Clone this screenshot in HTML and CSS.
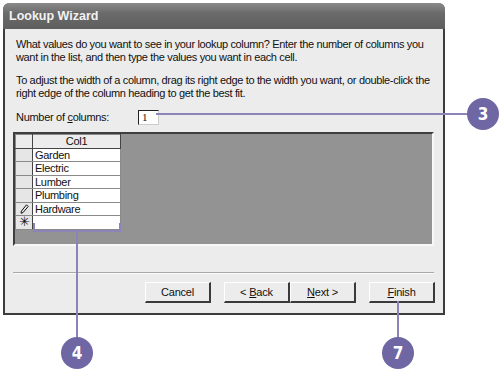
FILE: index.html
```html
<!DOCTYPE html>
<html>
<head>
    <meta charset="utf-8">
    <title>Lookup Wizard</title>
    <link rel="stylesheet" href="styles.css">
</head>
<body>
    <div class="stage">
        <div class="window">
            <div class="titlebar">Lookup Wizard</div>
            <div class="content">
                <p class="text">What values do you want to see in your lookup column? Enter the number of columns you<br>want in the list, and then type the values you want in each cell.</p>
                <p class="text">To adjust the width of a column, drag its right edge to the width you want, or double-click the<br>right edge of the column heading to get the best fit.</p>

                <div class="count-row">
                    <span class="count-label">Number of <u>c</u>olumns:</span>
                    <span class="count-box">1</span>
                </div>

                <div class="grid-panel">
                    <table class="grid">
                        <tr class="head"><td class="sel"></td><td class="cell">Col1</td></tr>
                        <tr><td class="sel"></td><td class="cell">Garden</td></tr>
                        <tr><td class="sel"></td><td class="cell">Electric</td></tr>
                        <tr><td class="sel"></td><td class="cell">Lumber</td></tr>
                        <tr><td class="sel"></td><td class="cell">Plumbing</td></tr>
                        <tr>
                            <td class="sel">
                                <svg width="9" height="10" viewBox="0 0 9 10"><path d="M6.5 0.8 L8.2 2.5 L3 8.6 L1 9.2 L1.4 7.1 Z" fill="none" stroke="#111" stroke-width="1"/></svg>
                            </td>
                            <td class="cell">Hardware</td>
                        </tr>
                        <tr><td class="sel star">&#10035;</td><td class="cell"></td></tr>
                    </table>
                </div>

                <div class="divider"></div>

                <div class="buttons">
                    <button class="btn">Cancel</button>
                    <div class="pair">
                        <button class="btn">&lt; <u>B</u>ack</button>
                        <button class="btn"><u>N</u>ext &gt;</button>
                    </div>
                    <button class="btn"><u>F</u>inish</button>
                </div>
            </div>
        </div>

        <!-- callouts -->
        <div class="line h3"></div>
        <div class="badge b3">3</div>

        <div class="bracket"></div>
        <div class="line v4"></div>
        <div class="badge b4">4</div>

        <div class="line v7"></div>
        <div class="badge b7">7</div>
    </div>
</body>
</html>
```

FILE: styles.css
```css
body {
    margin: 0;
    background: #ffffff;
    font-family: "Liberation Sans", Arial, sans-serif;
}
.stage {
    position: relative;
    width: 500px;
    height: 370px;
}
.window {
    position: relative;
    top: 3px;
    left: 3px;
    width: 438px;
    height: 310px;
    border: 2px solid #3c3c3c;
    border-top: none;
    border-radius: 7px 7px 0 0;
    background: #ececec;
    display: flex;
    flex-direction: column;
}
.titlebar {
    height: 26px;
    line-height: 26px;
    padding-left: 6px;
    border-radius: 6px 6px 0 0;
    background: linear-gradient(#8a8a8a, #6a6a6a 40%, #5e5e5e);
    color: #f2f2f2;
    font-family: "Liberation Sans", sans-serif;
    font-weight: bold;
    font-size: 12.5px;
    margin: 0 -2px;
}
.content {
    flex: 1;
    padding: 9px 8px 0 11px;
    font-size: 11px;
    color: #111;
}
.text {
    margin: 0 0 10px 0;
    line-height: 13px;
    white-space: nowrap;
    letter-spacing: -0.35px;
}
.count-row {
    display: flex;
    align-items: center;
    height: 16px;
    margin-top: -1px;
    letter-spacing: -0.3px;
}
.count-label {
    width: 122px;
}
.count-box {
    width: 16px;
    height: 13px;
    border: 1px solid #222;
    border-right-color: #ccc;
    border-bottom-color: #ccc;
    background: #fff;
    font-family: "Liberation Serif", serif;
    font-size: 11px;
    line-height: 13px;
    padding-left: 3px;
}
.grid-panel {
    margin-top: 7px;
    margin-left: -3px;
    width: 417px;
    height: 110px;
    background: #939393;
    border-top: 2px solid #3e3e3e;
    border-left: 2px solid #3e3e3e;
    border-right: 2px solid #f8f8f8;
    border-bottom: 2px solid #f8f8f8;
}
.grid {
    border-collapse: collapse;
    letter-spacing: -0.3px;
}
.grid td {
    height: 12.5px;
    padding: 0 2px;
    border: 1px solid #8a8a8a;
    line-height: 12px;
}
.grid .sel {
    width: 16px;
    background: #e6e6e6;
    border-right: 1px solid #444;
    text-align: center;
    padding: 0;
}
.grid .sel svg {
    display: block;
    margin: 0 auto;
}
.grid .star {
    font-size: 13px;
}
.grid .cell {
    width: 83px;
    background: #fff;
}
.grid .head td {
    background: #ececec;
    text-align: center;
    border-bottom: 1px solid #444;
}
.grid .head .cell {
    border-right: 1px solid #444;
}
.divider {
    margin-top: 26px;
    margin-left: -3px;
    width: 421px;
    border-top: 1px solid #a8a8a8;
    border-bottom: 1px solid #fbfbfb;
}
.buttons {
    display: flex;
    justify-content: flex-end;
    gap: 13px;
    margin-top: 8px;
}
.pair {
    display: flex;
}
.btn {
    width: 66px;
    height: 21px;
    padding: 0;
    background: #ececec;
    border: 1px solid #ececec;
    border-right: 2px solid #3a3a3a;
    border-bottom: 2px solid #3a3a3a;
    border-top-color: #ffffff;
    border-left-color: #ffffff;
    font-family: "Liberation Sans", sans-serif;
    font-size: 11px;
    letter-spacing: -0.2px;
    color: #111;
}

/* callouts */
.line {
    position: absolute;
    background: #8c84b8;
}
.h3 {
    left: 156px;
    top: 113px;
    width: 313px;
    height: 2px;
}
.v4 {
    left: 76px;
    top: 230px;
    width: 2px;
    height: 110px;
}
.v7 {
    left: 397px;
    top: 301px;
    width: 2px;
    height: 38px;
}
.bracket {
    position: absolute;
    left: 33px;
    top: 223px;
    width: 84px;
    height: 7px;
    border: 2px solid #8c84b8;
    border-top: none;
}
.badge {
    position: absolute;
    width: 32px;
    height: 32px;
    border-radius: 50%;
    background: #6f66a4;
    color: #ffffff;
    font-family: "DejaVu Sans Condensed", "DejaVu Sans", sans-serif;
    font-weight: bold;
    font-size: 17px;
    line-height: 32px;
    text-align: center;
}
.b3 {
    left: 467px;
    top: 98px;
}
.b4 {
    left: 61px;
    top: 337px;
}
.b7 {
    left: 382px;
    top: 337px;
}
```
